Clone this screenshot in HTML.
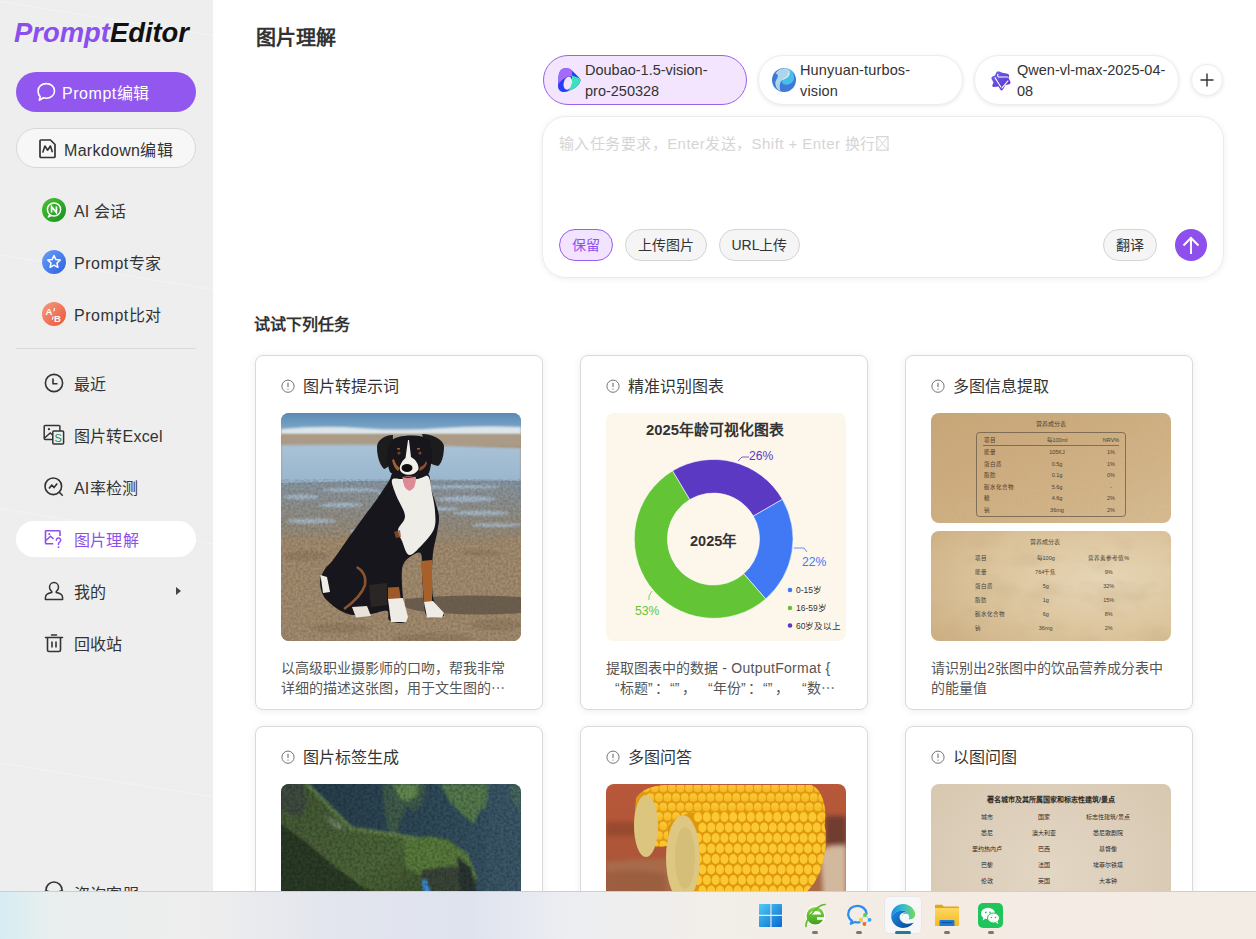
<!DOCTYPE html>
<html lang="zh-CN"><head><meta charset="utf-8">
<style>
*{box-sizing:border-box;margin:0;padding:0}
html,body{width:1256px;height:939px;overflow:hidden;background:#fff;font-family:"Liberation Sans",sans-serif;color:#333}
.abs{position:absolute}
#side{position:absolute;left:0;top:0;width:213px;height:939px;background:#eeeeee}
.logo{position:absolute;left:14px;top:15px;font-size:27.4px;font-weight:bold;font-style:italic;white-space:nowrap;letter-spacing:0px;line-height:36px}
.btn1{position:absolute;left:16px;top:72px;width:180px;height:40px;border-radius:20px;background:#9257ef;color:#fff;font-size:16px;letter-spacing:0.55px}
.btn2{position:absolute;left:16px;top:128px;width:180px;height:40px;border-radius:20px;background:#f7f7f7;border:1px solid #d8d8d8;color:#333;font-size:16px;letter-spacing:0.3px}
.btn1 span,.btn2 span{position:absolute;top:1.5px;line-height:40px;white-space:nowrap}
.nav{position:absolute;left:16px;width:180px;height:36px;border-radius:18px;font-size:16px;color:#333;letter-spacing:0.2px}
.nav .ic{position:absolute;left:26px;top:6px;width:24px;height:24px}
.nav .tx{position:absolute;left:58px;top:1.5px;line-height:36px;white-space:nowrap}
.nav.act{background:#fff;color:#8f4fee}
.divider{position:absolute;left:16px;top:348px;width:180px;height:1px;background:#d9d9d9}
.chip{position:absolute;top:55px;height:50px;border-radius:25px;border:1px solid #ededed;background:#fff;box-shadow:0 1px 4px rgba(0,0,0,.09)}
.chip.sel{background:#f2e5fd;border-color:#9b62ea;box-shadow:none}
.chip .ct{position:absolute;top:4px;font-size:14.5px;line-height:21px;color:#333;white-space:nowrap}
.pbtn{position:absolute;top:112px;height:32px;border-radius:16px;border:1px solid #d4d4d4;background:#f5f5f5;font-size:14px;line-height:30px;text-align:center;color:#333;white-space:nowrap}
.card{position:absolute;width:288px;border-radius:8px;border:1px solid #dadada;background:#fff;box-shadow:0 1px 8px rgba(0,0,0,.07)}
.card .ttl{position:absolute;left:47px;top:14.5px;font-size:16px;line-height:32px;color:#333;white-space:nowrap}
.card .inf{position:absolute;left:25px;top:23.3px}
.card .img{position:absolute;left:25px;top:57px;width:240px;border-radius:8px;overflow:hidden}
.card .desc{position:absolute;left:25px;top:302px;font-size:14px;line-height:20px;color:#555;white-space:nowrap}
</style></head><body>
<div id="side">
  <svg class="abs" style="left:0;top:0" width="213" height="939"><g stroke="#fafafa" stroke-width="1" opacity=".45"><path d="M0 1.5L213 35.5"/><path d="M0 255L213 289.5"/><path d="M0 508.5L213 544"/><path d="M0 763L213 797"/></g></svg>
  <div class="logo"><span style="color:#8b4ff0">Prompt</span><span style="color:#111">Editor</span></div>
  <div class="btn1">
    <svg class="abs" style="left:20px;top:10px" width="20" height="20" viewBox="0 0 20 20"><path d="M10.3 1.6c4.6 0 8.2 3.2 8.2 7.3s-3.6 7.3-8.2 7.3c-1 0-2-.15-2.9-.45L3.3 18.2l.9-3.6C2.8 13.3 2.1 11.2 2.1 8.9c0-4.1 3.6-7.3 8.2-7.3z" fill="none" stroke="#fff" stroke-width="1.6" stroke-linejoin="round"/></svg>
    <span style="left:46px">Prompt编辑</span>
  </div>
  <div class="btn2">
    <svg class="abs" style="left:21px;top:9px" width="20" height="21" viewBox="0 0 20 21"><path d="M3 2h9.5L17 6.5V18.5a1 1 0 0 1-1 1H3a1 1 0 0 1-1-1V3a1 1 0 0 1 1-1z" fill="none" stroke="#333" stroke-width="1.7" stroke-linejoin="round"/><path d="M4.9 14L6.9 8 9.6 12.2 12.4 8 14.2 13.6" fill="none" stroke="#333" stroke-width="1.6" stroke-linejoin="round" stroke-linecap="round"/></svg>
    <span style="left:47px">Markdown编辑</span>
  </div>

  <div class="nav" style="top:192px">
    <svg class="ic" viewBox="0 0 24 24"><defs><linearGradient id="gg" x1="0" y1="0" x2="1" y2="1"><stop offset="0" stop-color="#4cc232"/><stop offset="1" stop-color="#17901f"/></linearGradient></defs><circle cx="12" cy="12" r="12" fill="url(#gg)"/><circle cx="12" cy="11.5" r="6.6" fill="none" stroke="#fff" stroke-width="1.5"/><path d="M7.5 16.5l-1.6 2.8 3.3-1.4" fill="#fff" stroke="#fff" stroke-width="1"/><path d="M9.6 14.5V8.6l4.8 5.9V8.6" fill="none" stroke="#fff" stroke-width="1.7"/></svg>
    <span class="tx">AI 会话</span>
  </div>
  <div class="nav" style="top:244px">
    <svg class="ic" viewBox="0 0 24 24"><defs><linearGradient id="gb" x1="0" y1="0" x2="1" y2="1"><stop offset="0" stop-color="#6aa0f8"/><stop offset="1" stop-color="#2f5fe0"/></linearGradient></defs><circle cx="12" cy="12" r="12" fill="url(#gb)"/><path d="M12 5.6l1.9 4 4.3.5-3.2 2.9.9 4.3L12 15.2l-3.9 2.1.9-4.3-3.2-2.9 4.3-.5z" fill="none" stroke="#fff" stroke-width="1.5" stroke-linejoin="round"/></svg>
    <span class="tx" style="letter-spacing:.55px">Prompt专家</span>
  </div>
  <div class="nav" style="top:296px">
    <svg class="ic" viewBox="0 0 24 24"><defs><linearGradient id="gr" x1="0" y1="0" x2="1" y2="1"><stop offset="0" stop-color="#f79a7a"/><stop offset="1" stop-color="#e8563e"/></linearGradient></defs><circle cx="12" cy="12" r="12" fill="url(#gr)"/><text x="3.6" y="12.6" font-size="9.5" font-weight="bold" fill="#fff" font-family="Liberation Sans">A</text><path d="M12.6 6.2l-.8 3.2M11.2 14.5l-.9 3.2" stroke="#fff" stroke-width="1.1"/><text x="12" y="19.5" font-size="9.5" font-weight="bold" fill="#fff" font-family="Liberation Sans">B</text></svg>
    <span class="tx" style="letter-spacing:.55px">Prompt比对</span>
  </div>
  <div class="divider"></div>
  <div class="nav" style="top:365px">
    <svg class="ic" viewBox="0 0 24 24"><circle cx="12" cy="12" r="8.6" fill="none" stroke="#333" stroke-width="1.6"/><path d="M11 7.5v5.3h4.5" fill="none" stroke="#333" stroke-width="1.6"/></svg>
    <span class="tx">最近</span>
  </div>
  <div class="nav" style="top:417px">
    <svg class="ic" viewBox="0 0 24 24"><path d="M10.5 16.6H3.2a1 1 0 0 1-1-1V3.4a1 1 0 0 1 1-1H16.9a1 1 0 0 1 1 1V7.8" fill="none" stroke="#333" stroke-width="1.5"/><path d="M2.6 15L8.2 9.9 10.8 12.2" fill="none" stroke="#333" stroke-width="1.5"/><circle cx="7" cy="6.2" r="1.1" fill="#333"/><rect x="10.8" y="8" width="10.8" height="13" rx="1" fill="#eeeeee" stroke="#333" stroke-width="1.5"/><text x="12.4" y="19.2" font-size="11" fill="#1b8c5c" font-family="Liberation Sans">S</text></svg>
    <span class="tx">图片转Excel</span>
  </div>
  <div class="nav" style="top:469px">
    <svg class="ic" viewBox="0 0 24 24"><circle cx="11.3" cy="11.3" r="8.3" fill="none" stroke="#333" stroke-width="1.6"/><path d="M7 13.5l2.8-3.5 2.2 2.6 3.2-4" fill="none" stroke="#333" stroke-width="1.6" stroke-linejoin="round"/><path d="M17.3 17.3l3 3" stroke="#333" stroke-width="1.6" stroke-linecap="round"/></svg>
    <span class="tx">AI率检测</span>
  </div>
  <div class="nav act" style="top:521px">
    <svg class="ic" viewBox="0 0 24 24"><path d="M18 9V4.5a.8.8 0 0 0-.8-.8H4.3a.8.8 0 0 0-.8.8V16a.8.8 0 0 0 .8.8h7" fill="none" stroke="#8f4fee" stroke-width="1.6"/><path d="M4 13.5l4.5-4.2 3 2.6" fill="none" stroke="#8f4fee" stroke-width="1.5"/><circle cx="7.3" cy="7" r="1.1" fill="#8f4fee"/><path d="M14.3 13.2a2.2 2.2 0 1 1 3.3 1.9c-.8.5-1.1.9-1.1 1.8v.6" fill="none" stroke="#8f4fee" stroke-width="1.5" stroke-linecap="round"/><circle cx="16.5" cy="20.2" r=".9" fill="#8f4fee"/></svg>
    <span class="tx">图片理解</span>
  </div>
  <div class="nav" style="top:573px">
    <svg class="ic" viewBox="0 0 24 24"><path d="M12 3.5c2.6 0 4.5 2.1 4.5 4.8 0 2-1 3.5-2.3 4.3v.9c3.6.6 6.4 2.6 6.4 5.2v1.8H3.4v-1.8c0-2.6 2.8-4.6 6.4-5.2v-.9C8.5 11.8 7.5 10.3 7.5 8.3 7.5 5.6 9.4 3.5 12 3.5z" fill="none" stroke="#333" stroke-width="1.5" stroke-linejoin="round"/></svg>
    <span class="tx">我的</span>
    <svg class="abs" style="left:160px;top:14px" width="5" height="8" viewBox="0 0 5 8"><path d="M0 0l5 4-5 4z" fill="#444"/></svg>
  </div>
  <div class="nav" style="top:625px">
    <svg class="ic" viewBox="0 0 24 24"><path d="M3.5 6.5h17M9.5 4h5" stroke="#333" stroke-width="1.6" stroke-linecap="round"/><path d="M5.5 6.5v12.5a1.5 1.5 0 0 0 1.5 1.5h10a1.5 1.5 0 0 0 1.5-1.5V6.5" fill="none" stroke="#333" stroke-width="1.6"/><path d="M10 10.5v6M14 10.5v6" stroke="#333" stroke-width="1.6"/></svg>
    <span class="tx">回收站</span>
  </div>
  <div class="nav" style="top:875px">
    <svg class="ic" style="top:4px" viewBox="0 0 24 24"><path d="M4 13v-2a8 8 0 0 1 16 0v2" fill="none" stroke="#333" stroke-width="1.6"/><rect x="3" y="12" width="3.5" height="6" rx="1" fill="none" stroke="#333" stroke-width="1.5"/><rect x="17.5" y="12" width="3.5" height="6" rx="1" fill="none" stroke="#333" stroke-width="1.5"/></svg>
    <span class="tx">咨询客服</span>
  </div>
</div>

<div id="main">
  <div class="abs" style="left:256px;top:23.5px;font-size:20px;font-weight:bold;line-height:28px;color:#333;white-space:nowrap">图片理解</div>

  <div class="chip sel" style="left:543px;width:204px">
    <svg class="abs" style="left:13px;top:10px" width="24" height="27" viewBox="556 66 24 27"><defs><clipPath id="dbc"><path d="M565 68C560 68 557.5 72 557.5 78L557 86C557 90 560 92 563 92C566 92 569 90.5 572 89C576 87 579.5 83 579.5 80C579.5 79 578.5 78 577 76.5L571 70.5C569.5 69 567.5 68 565 68Z"/></clipPath></defs><g clip-path="url(#dbc)"><rect x="556" y="66" width="24" height="27" fill="#2a3cf4"/><path d="M556 66H571V76.5L566.5 76.5 561 80 556 85Z" fill="#a46afb"/><path d="M571 75.5L581 79V93H566.5L568.5 88.5 571 84Z" fill="#3ce0bb"/></g><ellipse cx="566.8" cy="83.2" rx="4.1" ry="6.6" transform="rotate(14 566.8 83.2)" fill="#f2e5fd"/></svg>
    <div class="ct" style="left:41px">Doubao-1.5-vision-<br>pro-250328</div>
  </div>
  <div class="chip" style="left:758px;width:205px">
    <svg class="abs" style="left:12px;top:11px" width="26" height="26" viewBox="771 67 26 26"><circle cx="784" cy="80" r="12" fill="#3d79d5"/><path d="M775.5 73.5C778 69 784 67.5 788.5 68.8C790.5 72 789 76.5 784.5 78.8C780.5 80.5 778.5 84.5 780.5 91.2C777.5 90 775.5 87 775.3 83.5C775.2 80 778.5 77.5 777.8 75.2C777.4 74 776 73.8 775.5 73.5Z" fill="#acd6ec"/><path d="M788.5 68.8C792.5 70.5 794.5 74.5 794 78.5C793.5 82.5 789.5 85 785.5 84.8C782.5 84.5 781.5 82.5 782 80.2C786.5 79.5 790.5 76 788.5 68.8Z" fill="#46bee9"/><path d="M789 70.5C789.8 74.5 787.5 77.8 782.8 79.5" fill="none" stroke="#e8f0f2" stroke-width="1.1"/></svg>
    <div class="ct" style="left:41px;letter-spacing:.15px">Hunyuan-turbos-<br>vision</div>
  </div>
  <div class="chip" style="left:974px;width:205px">
    <svg class="abs" style="left:15px;top:14px" width="21" height="21" viewBox="989 69 21 21"><defs><linearGradient id="qg" x1="0" y1="0" x2="1" y2="1"><stop offset="0" stop-color="#6b66e6"/><stop offset="1" stop-color="#5a2cd0"/></linearGradient></defs><path d="M996.2 70.6C997.5 70.2 999.5 70.6 1000.4 71.5L1006.5 72.8C1008 73.3 1008.5 74.5 1008 75.5L1007.5 77 1009.3 80.5C1009.8 81.8 1009.3 82.8 1008.3 83.3L1004.5 84 1001.8 88.8C1001 89.6 1000 89.6 999.3 88.5L997.5 85.5 992.8 86C991.8 86 991 85.2 991.3 84.2L992.5 81.5 990.7 78.2C990.2 77.2 990.5 76 991.5 75.5L994 74.5 995 72z" fill="url(#qg)"/><path d="M997 72.8L996.6 74.6 997.2 75.9H1007.3M993.8 76.4L1000 86.2M1007.2 79.6L1000.6 87.3" fill="none" stroke="#fff" stroke-width="1.05" stroke-linejoin="round"/></svg>
    <div class="ct" style="left:42px">Qwen-vl-max-2025-04-<br>08</div>
  </div>
  <div class="abs" style="left:1191px;top:64px;width:32px;height:32px;border-radius:16px;border:1px solid #ededed;background:#fff;box-shadow:0 1px 4px rgba(0,0,0,.09)">
    <svg class="abs" style="left:8px;top:8px" width="14" height="14" viewBox="0 0 14 14"><path d="M7 .5v13M.5 7h13" stroke="#333" stroke-width="1.4"/></svg>
  </div>

  <div class="abs" style="left:542px;top:116px;width:682px;height:162px;border-radius:24px;border:1px solid #ebebeb;box-shadow:0 1px 6px rgba(0,0,0,.07)">
    <div class="abs" style="left:16px;top:17px;font-size:15px;letter-spacing:0.45px;color:#d5d5d5;white-space:nowrap;line-height:20px">输入任务要求，Enter发送，Shift + Enter 换行<svg style="display:inline-block;vertical-align:-2px;margin-left:.5px" width="13" height="16" viewBox="0 0 13 16"><rect x=".8" y="1.6" width="11.2" height="13.6" fill="none" stroke="#d6d6d6" stroke-width="1.2"/><path d="M1 1.8L12 15M12 1.8L1 15" stroke="#d6d6d6" stroke-width="1"/></svg></div>
    <div class="pbtn" style="left:16px;width:54px;background:#f2e4fe;border-color:#9a5df0;color:#8f4fee">保留</div>
    <div class="pbtn" style="left:82px;width:82px">上传图片</div>
    <div class="pbtn" style="left:176px;width:81px">URL上传</div>
    <div class="pbtn" style="left:560px;width:54px">翻译</div>
    <div class="abs" style="left:632px;top:112px;width:32px;height:32px;border-radius:16px;background:#8d50ec">
      <svg class="abs" style="left:6px;top:5px" width="20" height="22" viewBox="0 0 20 22"><path d="M10 19V4M3.2 10.8L10 4l6.8 6.8" fill="none" stroke="#fff" stroke-width="2" stroke-linecap="square" stroke-linejoin="miter"/></svg>
    </div>
  </div>

  <div class="abs" style="left:254px;top:314px;font-size:16px;font-weight:bold;line-height:22px;color:#333;white-space:nowrap">试试下列任务</div>
  
  <div class="card" style="left:255px;top:355px;height:355px"><svg class="inf" width="14" height="14" viewBox="0 0 14 14"><circle cx="7" cy="7.2" r="6.1" fill="none" stroke="#737373" stroke-width="1"/><path d="M7 3.8v4.3" stroke="#737373" stroke-width="1.15"/><circle cx="7" cy="10.1" r=".7" fill="#737373"/></svg><div class="ttl">图片转提示词</div>
    <div class="img" style="height:228px"><svg width="240" height="228" viewBox="0 0 240 228" style="display:block">
<defs>
<linearGradient id="sea" x1="0" y1="0" x2="0" y2="1"><stop offset="0" stop-color="#5a8bb6"/><stop offset="1" stop-color="#80a7c8"/></linearGradient>
<linearGradient id="wet" x1="0" y1="0" x2="0" y2="1"><stop offset="0" stop-color="#a9c2d6"/><stop offset="1" stop-color="#98b5cd"/></linearGradient>
<linearGradient id="mud" x1="0" y1="0" x2="0" y2="1"><stop offset="0" stop-color="#8795a1"/><stop offset=".6" stop-color="#918d84"/><stop offset="1" stop-color="#9c8a70"/></linearGradient>
<linearGradient id="sand" x1="0" y1="0" x2="0" y2="1"><stop offset="0" stop-color="#a38b6d"/><stop offset="1" stop-color="#9b8468"/></linearGradient>
<filter id="bl"><feGaussianBlur stdDeviation="1.2"/></filter>
<filter id="bl2"><feGaussianBlur stdDeviation=".5"/></filter>
<filter id="dnoise" x="0" y="0" width="100%" height="100%"><feTurbulence type="fractalNoise" baseFrequency=".4" numOctaves="2" seed="7"/><feColorMatrix values="0 0 0 0 0  0 0 0 0 0  0 0 0 0 0  0 0 0 1.5 -.5"/></filter>
</defs>
<rect width="240" height="228" fill="url(#sand)"/>
<rect width="240" height="18" fill="url(#sea)"/>
<path d="M0 16Q40 12 80 15T160 15T240 14V22H0z" fill="#dce5ea" filter="url(#bl)"/>
<rect y="21" width="240" height="12" fill="#ab9b86" filter="url(#bl)"/>
<path d="M0 32Q120 30 240 35V72H0z" fill="url(#wet)" filter="url(#bl)"/>
<path d="M0 70Q120 66 240 68V128Q120 132 0 128z" fill="url(#mud)"/>
<g fill="#aac0d3" opacity=".8" filter="url(#bl)"><ellipse cx="120" cy="80" rx="25" ry="2"/><ellipse cx="110" cy="104" rx="20" ry="2"/><ellipse cx="160" cy="96" rx="18" ry="2"/><ellipse cx="90" cy="118" rx="22" ry="1.8"/><ellipse cx="20" cy="84" rx="18" ry="2.5"/><ellipse cx="60" cy="92" rx="22" ry="2.5"/><ellipse cx="185" cy="86" rx="30" ry="3"/><ellipse cx="200" cy="100" rx="28" ry="2.5"/><ellipse cx="30" cy="108" rx="25" ry="2.5"/><ellipse cx="215" cy="112" rx="25" ry="2"/><ellipse cx="70" cy="77" rx="30" ry="2"/><ellipse cx="180" cy="74" rx="40" ry="2"/></g>
<path d="M0 126Q60 122 120 128T240 124V228H0z" fill="#a28b6e" filter="url(#bl2)"/>
<g fill="#857159" opacity=".45" filter="url(#bl)"><ellipse cx="25" cy="143" rx="22" ry="5"/><ellipse cx="200" cy="140" rx="20" ry="3"/><ellipse cx="215" cy="212" rx="25" ry="6"/><ellipse cx="60" cy="215" rx="30" ry="5"/><ellipse cx="150" cy="225" rx="40" ry="5"/></g><rect y="66" width="240" height="162" filter="url(#dnoise)" opacity=".22"/>
<path d="M124 186Q180 180 240 184V200Q200 203 160 200Q135 199 124 194z" fill="#5e5245" opacity=".8" filter="url(#bl2)"/>
<g filter="url(#bl2)">
<path d="M108.0 68.0C105.3 72.3 100.3 79.8 96.0 86.0C91.7 92.2 87.0 98.2 82.0 105.0C77.0 111.8 71.0 120.0 66.0 127.0C61.0 134.0 55.7 142.2 52.0 147.0C48.3 151.8 46.2 152.5 44.0 156.0C41.8 159.5 39.3 163.7 39.0 168.0C38.7 172.3 40.2 178.2 42.0 182.0C43.8 185.8 47.0 188.3 50.0 191.0C53.0 193.7 56.3 196.2 60.0 198.0C63.7 199.8 67.0 201.5 72.0 202.0C77.0 202.5 84.3 201.7 90.0 201.0C95.7 200.3 103.0 197.0 106.0 198.0C109.0 199.0 106.0 205.0 108.0 207.0C110.0 209.0 115.2 210.0 118.0 210.0C120.8 210.0 124.2 210.0 125.0 207.0C125.8 204.0 123.7 197.8 123.0 192.0C122.3 186.2 121.2 178.7 121.0 172.0C120.8 165.3 120.2 157.0 122.0 152.0C123.8 147.0 129.0 143.8 132.0 142.0C135.0 140.2 138.5 138.0 140.0 141.0C141.5 144.0 140.5 151.8 141.0 160.0C141.5 168.2 142.2 182.8 143.0 190.0C143.8 197.2 143.5 200.7 146.0 203.0C148.5 205.3 155.2 204.3 158.0 204.0C160.8 203.7 163.8 203.7 163.0 201.0C162.2 198.3 155.0 194.0 153.0 188.0C151.0 182.0 151.2 173.0 151.0 165.0C150.8 157.0 151.2 147.5 152.0 140.0C152.8 132.5 155.0 126.0 156.0 120.0C157.0 114.0 158.3 109.3 158.0 104.0C157.7 98.7 155.3 92.7 154.0 88.0C152.7 83.3 151.0 80.3 150.0 76.0C149.0 71.7 149.7 64.5 148.0 62.0C146.3 59.5 144.3 61.0 140.0 61.0C135.7 61.0 126.7 62.2 122.0 62.0C117.3 61.8 114.3 59.0 112.0 60.0C109.7 61.0 110.7 63.7 108.0 68.0Z" fill="#17171b"/>
<path d="M111.0 67.0C110.0 69.7 112.8 76.0 115.0 82.0C117.2 88.0 123.7 97.2 124.0 103.0C124.3 108.8 117.5 112.8 117.0 117.0C116.5 121.2 119.2 123.8 121.0 128.0C122.8 132.2 124.8 141.2 128.0 142.0C131.2 142.8 135.8 137.3 140.0 133.0C144.2 128.7 150.7 121.8 153.0 116.0C155.3 110.2 154.3 104.0 154.0 98.0C153.7 92.0 152.2 85.8 151.0 80.0C149.8 74.2 149.5 65.3 147.0 63.0C144.5 60.7 140.3 65.5 136.0 66.0C131.7 66.5 125.2 65.8 121.0 66.0C116.8 66.2 112.0 64.3 111.0 67.0Z" fill="#efede8"/>
<path d="M113 119L119 117 120 124 115 125z" fill="#8a5430" opacity=".8"/>
<path d="M140 148L151 147 151 189 143 189z" fill="#a8612c"/>
<path d="M107 174.5L118 174 120 187 107 187z" fill="#9c5a2c"/>
<path d="M88 172L106 170 106 192 90 194z" fill="#3a332e" opacity=".6"/>
<path d="M75.7 154Q86 160 84 172Q80 184 63 196" fill="none" stroke="#8a5230" stroke-width="2.5"/>
<path d="M39.5 162L46 164 49 179 42 180z" fill="#efece6"/>
<path d="M107 186L122 185 127 204 125 209 110 209z" fill="#efece6"/>
<path d="M143 189L152 188 163 200 161 204.5 146 204.5z" fill="#efece6"/>
<path d="M71 194L86 193 90 203 75 204.5z" fill="#e8e2d8"/>
<path d="M112 22C103 22 96 28 96 34C96 44 99 52 103 56C107 55 111 50 111 46z" fill="#1c1b1f"/>
<path d="M141 21C152 21 162 27 163 33C163 42 161 50 157 53C152 52 148 50 148 48z" fill="#1c1b1f"/>
<path d="M110 28C114 22 140 20 148 27C152 35 151 52 148 60C143 68 117 68 109 59C105 50 106 36 110 28z" fill="#17161a"/>
<path d="M127 27L124.5 45C121 48 118 53 119 57C121 63 134 64 137.5 56C138 51 134 46 130 44L128 27z" fill="#f1efea"/>
<path d="M111 47C112 52 114 56 117 58L119 55C116 53 114 50 113 46z" fill="#a0602c"/>
<path d="M146 50C145 54 142 57 138 58L139 54C142 53 144 51 145 48z" fill="#8a5030"/>
<circle cx="118" cy="40" r="1.6" fill="#7a4020"/><circle cx="139" cy="40" r="1.6" fill="#7a4020"/>
<path d="M116 35.5l3 .5M136 36l3 -.5" stroke="#a06030" stroke-width="1.5"/>
<ellipse cx="126" cy="55" rx="5.5" ry="4" fill="#111"/>
<path d="M121.5 64Q128 62 135 64Q135 76 128.5 78Q122 76 121.5 64z" fill="#dc8a96"/>
<path d="M120 63Q128 66 137 62" fill="none" stroke="#222" stroke-width="1.2"/>
</g>
</svg></div>
    <div class="desc">以高级职业摄影师的口吻，帮我非常<br>详细的描述这张图，用于文生图的⋯</div>
  </div>
  <div class="card" style="left:580px;top:355px;height:355px"><svg class="inf" width="14" height="14" viewBox="0 0 14 14"><circle cx="7" cy="7.2" r="6.1" fill="none" stroke="#737373" stroke-width="1"/><path d="M7 3.8v4.3" stroke="#737373" stroke-width="1.15"/><circle cx="7" cy="10.1" r=".7" fill="#737373"/></svg><div class="ttl">精准识别图表</div>
    <div class="img" style="height:228px"><svg width="240" height="228" viewBox="0 0 240 228" style="display:block" font-family="Liberation Sans">
<rect width="240" height="228" fill="#fdf6eb"/>
<text x="40" y="22" font-size="14.8" font-weight="bold" fill="#333">2025年龄可视化图表</text>
<g transform="translate(107.5 126)">
<path d="M68.9 -39.8A79.5 79.5 0 0 1 52.2 60L30.2 34.7A46 46 0 0 0 39.8 -23z" fill="#4179f5" stroke="#fff" stroke-width=".6"/>
<path d="M52.2 60A79.5 79.5 0 1 1 -40.9 -68.2L-23.7 -39.4A46 46 0 1 0 30.2 34.7z" fill="#63c535" stroke="#fff" stroke-width=".6"/>
<path d="M-40.9 -68.2A79.5 79.5 0 0 1 68.9 -39.8L39.8 -23A46 46 0 0 0 -23.7 -39.4z" fill="#5b39c3" stroke="#fff" stroke-width=".6"/>
</g>
<text x="84" y="133" font-size="14.5" font-weight="bold" fill="#333">2025年</text>
<path d="M132 48l4-4h7" fill="none" stroke="#5b39c3" stroke-width=".8"/>
<text x="143" y="47" font-size="12.2" fill="#5b39c3">26%</text>
<path d="M188 135h10l3 4" fill="none" stroke="#4179f5" stroke-width=".8"/>
<text x="196" y="153" font-size="12.2" fill="#4179f5">22%</text>
<path d="M46 178l-3 5v4" fill="none" stroke="#63c535" stroke-width=".8"/>
<text x="29" y="202" font-size="12.2" fill="#63c535">53%</text>
<circle cx="184" cy="177" r="2.3" fill="#4179f5"/><text x="190" y="180" font-size="8.5" fill="#333">0-15岁</text>
<circle cx="184" cy="195" r="2.3" fill="#63c535"/><text x="190" y="198" font-size="8.5" fill="#333">16-59岁</text>
<circle cx="184" cy="212.5" r="2.3" fill="#5b39c3"/><text x="190" y="215.5" font-size="8.5" fill="#333">60岁及以上</text>
</svg></div>
    <div class="desc" style="width:240px;height:40px">提取图表中的数据<span style="letter-spacing:.3px"> - OutputFormat {</span><span class="abs" style="left:9px;top:20px">“</span><span class="abs" style="left:14px;top:20px">标题</span><span class="abs" style="left:42px;top:20px">”</span><span class="abs" style="left:49px;top:20px">：</span><span class="abs" style="left:64px;top:20px">“”</span><span class="abs" style="left:76px;top:20px">，</span><span class="abs" style="left:102px;top:20px">“</span><span class="abs" style="left:107px;top:20px">年份</span><span class="abs" style="left:135px;top:20px">”</span><span class="abs" style="left:142px;top:20px">：</span><span class="abs" style="left:157px;top:20px">“”</span><span class="abs" style="left:169px;top:20px">，</span><span class="abs" style="left:196px;top:20px">“</span><span class="abs" style="left:201px;top:20px">数</span><span class="abs" style="left:215px;top:20px">⋯</span></div>
  </div>
  <div class="card" style="left:905px;top:355px;height:355px"><svg class="inf" width="14" height="14" viewBox="0 0 14 14"><circle cx="7" cy="7.2" r="6.1" fill="none" stroke="#737373" stroke-width="1"/><path d="M7 3.8v4.3" stroke="#737373" stroke-width="1.15"/><circle cx="7" cy="10.1" r=".7" fill="#737373"/></svg><div class="ttl">多图信息提取</div>
    <div class="img" style="height:110px"><svg width="240" height="110" viewBox="0 0 240 110" style="display:block" font-family="Liberation Sans"><defs><linearGradient id="kr" x1="0" y1="0" x2="1" y2="1"><stop offset="0" stop-color="#c7a677"/><stop offset=".6" stop-color="#d0b185"/><stop offset="1" stop-color="#d6bb91"/></linearGradient></defs><filter id="kraft" x="0" y="0" width="100%" height="100%"><feTurbulence type="fractalNoise" baseFrequency=".6" numOctaves="2" seed="2"/><feColorMatrix values="0 0 0 0 .45  0 0 0 0 .33  0 0 0 0 .18  0 0 0 1.2 -.5"/></filter><rect width="240" height="110" fill="url(#kr)"/><rect width="240" height="110" filter="url(#kraft)" opacity=".25"/><text x="120" y="13" font-size="6" fill="#4a3f33" text-anchor="middle">营养成分表</text><rect x="45.5" y="19.5" width="149" height="84" rx="3" fill="none" stroke="#5e5244" stroke-width=".7"/><path d="M52 32.5h136" stroke="#5e5244" stroke-width=".7"/><text x="52.5" y="29" font-size="5.5" fill="#4a3f33">项目</text><text x="126" y="29" font-size="5.5" fill="#4a3f33" text-anchor="middle">每100ml</text><text x="180" y="29" font-size="5.5" fill="#4a3f33" text-anchor="middle">NRV%</text><text x="52.5" y="41" font-size="5.5" fill="#4a3f33">能量</text><text x="126" y="41" font-size="5.5" fill="#4a3f33" text-anchor="middle">105KJ</text><text x="180" y="41" font-size="5.5" fill="#4a3f33" text-anchor="middle">1%</text><text x="52.5" y="52.5" font-size="5.5" fill="#4a3f33">蛋白质</text><text x="126" y="52.5" font-size="5.5" fill="#4a3f33" text-anchor="middle">0.5g</text><text x="180" y="52.5" font-size="5.5" fill="#4a3f33" text-anchor="middle">1%</text><text x="52.5" y="64" font-size="5.5" fill="#4a3f33">脂肪</text><text x="126" y="64" font-size="5.5" fill="#4a3f33" text-anchor="middle">0.1g</text><text x="180" y="64" font-size="5.5" fill="#4a3f33" text-anchor="middle">0%</text><text x="52.5" y="75.5" font-size="5.5" fill="#4a3f33">碳水化合物</text><text x="126" y="75.5" font-size="5.5" fill="#4a3f33" text-anchor="middle">5.6g</text><text x="180" y="75.5" font-size="5.5" fill="#4a3f33" text-anchor="middle">-</text><text x="52.5" y="87" font-size="5.5" fill="#4a3f33">糖</text><text x="126" y="87" font-size="5.5" fill="#4a3f33" text-anchor="middle">4.6g</text><text x="180" y="87" font-size="5.5" fill="#4a3f33" text-anchor="middle">2%</text><text x="52.5" y="98.5" font-size="5.5" fill="#4a3f33">钠</text><text x="126" y="98.5" font-size="5.5" fill="#4a3f33" text-anchor="middle">36mg</text><text x="180" y="98.5" font-size="5.5" fill="#4a3f33" text-anchor="middle">2%</text></svg></div>
    <div class="img" style="top:175px;height:110px"><svg width="240" height="110" viewBox="0 0 240 110" style="display:block" font-family="Liberation Sans"><defs><radialGradient id="pp" cx=".72" cy=".45" r=".9"><stop offset="0" stop-color="#e6d5b6"/><stop offset=".55" stop-color="#dbc49c"/><stop offset="1" stop-color="#cdae82"/></radialGradient></defs><filter id="blot" x="0" y="0" width="100%" height="100%"><feTurbulence type="fractalNoise" baseFrequency=".025 .04" numOctaves="3" seed="11"/><feColorMatrix values="0 0 0 0 .55  0 0 0 0 .4  0 0 0 0 .22  0 0 0 2.2 -1.05"/></filter><rect width="240" height="110" fill="url(#pp)"/><rect width="240" height="110" filter="url(#blot)" opacity=".35"/><text x="114" y="13" font-size="6" fill="#4a3f33" text-anchor="middle">营养成分表</text><text x="43.6" y="28.5" font-size="5.5" fill="#4a3f33">项目</text><text x="114.7" y="28.5" font-size="5.5" fill="#4a3f33" text-anchor="middle">每100g</text><text x="177.7" y="28.5" font-size="5.5" fill="#4a3f33" text-anchor="middle">营养素参考值%</text><text x="43.6" y="42.5" font-size="5.5" fill="#4a3f33">能量</text><text x="114.7" y="42.5" font-size="5.5" fill="#4a3f33" text-anchor="middle">764千焦</text><text x="177.7" y="42.5" font-size="5.5" fill="#4a3f33" text-anchor="middle">9%</text><text x="43.6" y="57" font-size="5.5" fill="#4a3f33">蛋白质</text><text x="114.7" y="57" font-size="5.5" fill="#4a3f33" text-anchor="middle">5g</text><text x="177.7" y="57" font-size="5.5" fill="#4a3f33" text-anchor="middle">32%</text><text x="43.6" y="70.5" font-size="5.5" fill="#4a3f33">脂肪</text><text x="114.7" y="70.5" font-size="5.5" fill="#4a3f33" text-anchor="middle">1g</text><text x="177.7" y="70.5" font-size="5.5" fill="#4a3f33" text-anchor="middle">15%</text><text x="43.6" y="85" font-size="5.5" fill="#4a3f33">碳水化合物</text><text x="114.7" y="85" font-size="5.5" fill="#4a3f33" text-anchor="middle">6g</text><text x="177.7" y="85" font-size="5.5" fill="#4a3f33" text-anchor="middle">8%</text><text x="43.6" y="99" font-size="5.5" fill="#4a3f33">钠</text><text x="114.7" y="99" font-size="5.5" fill="#4a3f33" text-anchor="middle">36mg</text><text x="177.7" y="99" font-size="5.5" fill="#4a3f33" text-anchor="middle">2%</text></svg></div>
    <div class="desc">请识别出2张图中的饮品营养成分表中<br>的能量值</div>
  </div>
  <div class="card" style="left:255px;top:726px;height:300px"><svg class="inf" width="14" height="14" viewBox="0 0 14 14"><circle cx="7" cy="7.2" r="6.1" fill="none" stroke="#737373" stroke-width="1"/><path d="M7 3.8v4.3" stroke="#737373" stroke-width="1.15"/><circle cx="7" cy="10.1" r=".7" fill="#737373"/></svg><div class="ttl">图片标签生成</div>
    <div class="img" style="height:228px"><svg width="240" height="228" viewBox="0 0 240 228" style="display:block">
<defs><linearGradient id="cl" x1="0" y1="0" x2="1" y2="0"><stop offset="0" stop-color="#263b48"/><stop offset=".6" stop-color="#2f4a59"/><stop offset="1" stop-color="#3a5668"/></linearGradient>
<linearGradient id="gs" x1="0" y1="0" x2="1" y2="1"><stop offset="0" stop-color="#415636"/><stop offset=".55" stop-color="#4d6638"/><stop offset="1" stop-color="#30412a"/></linearGradient><filter id="noise" x="0" y="0" width="100%" height="100%"><feTurbulence type="fractalNoise" baseFrequency=".35" numOctaves="2" seed="4"/><feColorMatrix values="0 0 0 0 0  0 0 0 0 0  0 0 0 0 0  0 0 0 1.6 -.55"/></filter>
<filter id="mb"><feGaussianBlur stdDeviation="1.3"/></filter></defs>
<rect width="240" height="228" fill="url(#cl)"/>
<g filter="url(#mb)">
<path d="M101 0h44l-3 18-8 10-8-5-6 12-4 15-6 3-6-20z" fill="#43604a" opacity=".8"/>
<path d="M112 0h26l-2 12-10 6-8-4z" fill="#62884f"/>
<path d="M159 0h50l-3 22-8 6-5 12-10-8-14-14z" fill="#557a4e"/>
<path d="M228 0h12v28l-8-8z" fill="#557a4e" opacity=".8"/>
<path d="M205 0h35v228h-35z" fill="#3d596a" opacity=".5"/>
<path d="M0 0h26l22 22 22 22 40 6 30 5 25 3 20 12 10 25v33H0z" fill="url(#gs)"/>
<path d="M26 0l22 22 22 22 40 6 30 5 25 3 20 12 10 25" fill="none" stroke="#76964f" stroke-width="4" opacity=".6"/>
<path d="M0 40l25 18 28 24 30 22 20 6H0z" fill="#2c3a27"/>
<path d="M0 0h22l4 18-6 15-12-4-8-6z" fill="#3f4b40"/>
<path d="M44 32l14 6 6 8-10-2z" fill="#8d9c8a" opacity=".55"/>
<path d="M122 56l28-4 18 4 17 14 8 18-10 6-28 4-30-14z" fill="#587a3e"/>
<path d="M140 86l32-4 18 8 5 20h-52z" fill="#3a4538"/>
<path d="M176 72l14 12 6 26h-16z" fill="#2c3633"/>
<path d="M141 96l4-1 5 15h-7z" fill="#3b8fd0"/>
</g>
<rect width="240" height="228" filter="url(#noise)" opacity=".35"/>
</svg></div>
  </div>
  <div class="card" style="left:580px;top:726px;height:300px"><svg class="inf" width="14" height="14" viewBox="0 0 14 14"><circle cx="7" cy="7.2" r="6.1" fill="none" stroke="#737373" stroke-width="1"/><path d="M7 3.8v4.3" stroke="#737373" stroke-width="1.15"/><circle cx="7" cy="10.1" r=".7" fill="#737373"/></svg><div class="ttl">多图问答</div>
    <div class="img" style="height:228px"><svg width="240" height="228" viewBox="0 0 240 228" style="display:block">
<defs><linearGradient id="cbg" x1="0" y1="0" x2="0" y2="1"><stop offset="0" stop-color="#b9583a"/><stop offset=".35" stop-color="#ac5538"/><stop offset="1" stop-color="#a35c3c"/></linearGradient>
<linearGradient id="ky" x1="0" y1="0" x2="0" y2="1"><stop offset="0" stop-color="#fcca3a"/><stop offset="1" stop-color="#f7b81c"/></linearGradient>
<clipPath id="cc1"><path d="M30 14Q38 2 60 1H205Q216 5 219 25Q221 45 211 62H60Q33 66 28 40z"/></clipPath>
<clipPath id="cc2"><path d="M62 42Q70 29 95 28H211Q223 40 219 66Q216 96 196 112H95Q70 106 62 72z"/></clipPath>
<filter id="cb"><feGaussianBlur stdDeviation="2"/></filter><filter id="cb2"><feGaussianBlur stdDeviation=".45"/></filter></defs>
<rect width="240" height="228" fill="url(#cbg)"/>
<g filter="url(#cb)"><path d="M0 38h32v14H0z" fill="#7a3a28" opacity=".45"/><path d="M0 78Q60 70 120 80T240 62V228H0z" fill="#a86b4a"/><path d="M0 88Q30 84 60 90V228H0z" fill="#8e5238" opacity=".5"/><path d="M214 66Q240 56 240 62V228H196Q226 150 214 66z" fill="#d9c7ad" opacity=".85"/><path d="M220 32h20v30h-20z" fill="#3a2a25" opacity=".55"/></g>
<g filter="url(#cb2)">
<path d="M30 14Q38 2 60 1H205Q216 5 219 25Q221 45 211 62H60Q33 66 28 40z" fill="#e09a12"/>
<g clip-path="url(#cc1)" fill="url(#ky)"><ellipse cx="40.0" cy="4.0" rx="3.9" ry="4.3"/><ellipse cx="48.6" cy="4.0" rx="3.9" ry="4.3"/><ellipse cx="57.2" cy="4.0" rx="3.9" ry="4.3"/><ellipse cx="65.8" cy="4.0" rx="3.9" ry="4.3"/><ellipse cx="74.4" cy="4.0" rx="3.9" ry="4.3"/><ellipse cx="83.0" cy="4.0" rx="3.9" ry="4.3"/><ellipse cx="91.6" cy="4.0" rx="3.9" ry="4.3"/><ellipse cx="100.2" cy="4.0" rx="3.9" ry="4.3"/><ellipse cx="108.8" cy="4.0" rx="3.9" ry="4.3"/><ellipse cx="117.4" cy="4.0" rx="3.9" ry="4.3"/><ellipse cx="126.0" cy="4.0" rx="3.9" ry="4.3"/><ellipse cx="134.6" cy="4.0" rx="3.9" ry="4.3"/><ellipse cx="143.2" cy="4.0" rx="3.9" ry="4.3"/><ellipse cx="151.8" cy="4.0" rx="3.9" ry="4.3"/><ellipse cx="160.4" cy="4.0" rx="3.9" ry="4.3"/><ellipse cx="169.0" cy="4.0" rx="3.9" ry="4.3"/><ellipse cx="177.6" cy="4.0" rx="3.9" ry="4.3"/><ellipse cx="186.2" cy="4.0" rx="3.9" ry="4.3"/><ellipse cx="194.8" cy="4.0" rx="3.9" ry="4.3"/><ellipse cx="203.4" cy="4.0" rx="3.9" ry="4.3"/><ellipse cx="212.0" cy="4.0" rx="3.9" ry="4.3"/><ellipse cx="220.6" cy="4.0" rx="3.9" ry="4.3"/><ellipse cx="44.3" cy="13.5" rx="3.9" ry="4.3"/><ellipse cx="52.9" cy="13.5" rx="3.9" ry="4.3"/><ellipse cx="61.5" cy="13.5" rx="3.9" ry="4.3"/><ellipse cx="70.1" cy="13.5" rx="3.9" ry="4.3"/><ellipse cx="78.7" cy="13.5" rx="3.9" ry="4.3"/><ellipse cx="87.3" cy="13.5" rx="3.9" ry="4.3"/><ellipse cx="95.9" cy="13.5" rx="3.9" ry="4.3"/><ellipse cx="104.5" cy="13.5" rx="3.9" ry="4.3"/><ellipse cx="113.1" cy="13.5" rx="3.9" ry="4.3"/><ellipse cx="121.7" cy="13.5" rx="3.9" ry="4.3"/><ellipse cx="130.3" cy="13.5" rx="3.9" ry="4.3"/><ellipse cx="138.9" cy="13.5" rx="3.9" ry="4.3"/><ellipse cx="147.5" cy="13.5" rx="3.9" ry="4.3"/><ellipse cx="156.1" cy="13.5" rx="3.9" ry="4.3"/><ellipse cx="164.7" cy="13.5" rx="3.9" ry="4.3"/><ellipse cx="173.3" cy="13.5" rx="3.9" ry="4.3"/><ellipse cx="181.9" cy="13.5" rx="3.9" ry="4.3"/><ellipse cx="190.5" cy="13.5" rx="3.9" ry="4.3"/><ellipse cx="199.1" cy="13.5" rx="3.9" ry="4.3"/><ellipse cx="207.7" cy="13.5" rx="3.9" ry="4.3"/><ellipse cx="216.3" cy="13.5" rx="3.9" ry="4.3"/><ellipse cx="40.0" cy="23.0" rx="3.9" ry="4.3"/><ellipse cx="48.6" cy="23.0" rx="3.9" ry="4.3"/><ellipse cx="57.2" cy="23.0" rx="3.9" ry="4.3"/><ellipse cx="65.8" cy="23.0" rx="3.9" ry="4.3"/><ellipse cx="74.4" cy="23.0" rx="3.9" ry="4.3"/><ellipse cx="83.0" cy="23.0" rx="3.9" ry="4.3"/><ellipse cx="91.6" cy="23.0" rx="3.9" ry="4.3"/><ellipse cx="100.2" cy="23.0" rx="3.9" ry="4.3"/><ellipse cx="108.8" cy="23.0" rx="3.9" ry="4.3"/><ellipse cx="117.4" cy="23.0" rx="3.9" ry="4.3"/><ellipse cx="126.0" cy="23.0" rx="3.9" ry="4.3"/><ellipse cx="134.6" cy="23.0" rx="3.9" ry="4.3"/><ellipse cx="143.2" cy="23.0" rx="3.9" ry="4.3"/><ellipse cx="151.8" cy="23.0" rx="3.9" ry="4.3"/><ellipse cx="160.4" cy="23.0" rx="3.9" ry="4.3"/><ellipse cx="169.0" cy="23.0" rx="3.9" ry="4.3"/><ellipse cx="177.6" cy="23.0" rx="3.9" ry="4.3"/><ellipse cx="186.2" cy="23.0" rx="3.9" ry="4.3"/><ellipse cx="194.8" cy="23.0" rx="3.9" ry="4.3"/><ellipse cx="203.4" cy="23.0" rx="3.9" ry="4.3"/><ellipse cx="212.0" cy="23.0" rx="3.9" ry="4.3"/><ellipse cx="220.6" cy="23.0" rx="3.9" ry="4.3"/><ellipse cx="44.3" cy="32.5" rx="3.9" ry="4.3"/><ellipse cx="52.9" cy="32.5" rx="3.9" ry="4.3"/><ellipse cx="61.5" cy="32.5" rx="3.9" ry="4.3"/><ellipse cx="70.1" cy="32.5" rx="3.9" ry="4.3"/><ellipse cx="78.7" cy="32.5" rx="3.9" ry="4.3"/><ellipse cx="87.3" cy="32.5" rx="3.9" ry="4.3"/><ellipse cx="95.9" cy="32.5" rx="3.9" ry="4.3"/><ellipse cx="104.5" cy="32.5" rx="3.9" ry="4.3"/><ellipse cx="113.1" cy="32.5" rx="3.9" ry="4.3"/><ellipse cx="121.7" cy="32.5" rx="3.9" ry="4.3"/><ellipse cx="130.3" cy="32.5" rx="3.9" ry="4.3"/><ellipse cx="138.9" cy="32.5" rx="3.9" ry="4.3"/><ellipse cx="147.5" cy="32.5" rx="3.9" ry="4.3"/><ellipse cx="156.1" cy="32.5" rx="3.9" ry="4.3"/><ellipse cx="164.7" cy="32.5" rx="3.9" ry="4.3"/><ellipse cx="173.3" cy="32.5" rx="3.9" ry="4.3"/><ellipse cx="181.9" cy="32.5" rx="3.9" ry="4.3"/><ellipse cx="190.5" cy="32.5" rx="3.9" ry="4.3"/><ellipse cx="199.1" cy="32.5" rx="3.9" ry="4.3"/><ellipse cx="207.7" cy="32.5" rx="3.9" ry="4.3"/><ellipse cx="216.3" cy="32.5" rx="3.9" ry="4.3"/><ellipse cx="40.0" cy="42.0" rx="3.9" ry="4.3"/><ellipse cx="48.6" cy="42.0" rx="3.9" ry="4.3"/><ellipse cx="57.2" cy="42.0" rx="3.9" ry="4.3"/><ellipse cx="65.8" cy="42.0" rx="3.9" ry="4.3"/><ellipse cx="74.4" cy="42.0" rx="3.9" ry="4.3"/><ellipse cx="83.0" cy="42.0" rx="3.9" ry="4.3"/><ellipse cx="91.6" cy="42.0" rx="3.9" ry="4.3"/><ellipse cx="100.2" cy="42.0" rx="3.9" ry="4.3"/><ellipse cx="108.8" cy="42.0" rx="3.9" ry="4.3"/><ellipse cx="117.4" cy="42.0" rx="3.9" ry="4.3"/><ellipse cx="126.0" cy="42.0" rx="3.9" ry="4.3"/><ellipse cx="134.6" cy="42.0" rx="3.9" ry="4.3"/><ellipse cx="143.2" cy="42.0" rx="3.9" ry="4.3"/><ellipse cx="151.8" cy="42.0" rx="3.9" ry="4.3"/><ellipse cx="160.4" cy="42.0" rx="3.9" ry="4.3"/><ellipse cx="169.0" cy="42.0" rx="3.9" ry="4.3"/><ellipse cx="177.6" cy="42.0" rx="3.9" ry="4.3"/><ellipse cx="186.2" cy="42.0" rx="3.9" ry="4.3"/><ellipse cx="194.8" cy="42.0" rx="3.9" ry="4.3"/><ellipse cx="203.4" cy="42.0" rx="3.9" ry="4.3"/><ellipse cx="212.0" cy="42.0" rx="3.9" ry="4.3"/><ellipse cx="220.6" cy="42.0" rx="3.9" ry="4.3"/><ellipse cx="44.3" cy="51.5" rx="3.9" ry="4.3"/><ellipse cx="52.9" cy="51.5" rx="3.9" ry="4.3"/><ellipse cx="61.5" cy="51.5" rx="3.9" ry="4.3"/><ellipse cx="70.1" cy="51.5" rx="3.9" ry="4.3"/><ellipse cx="78.7" cy="51.5" rx="3.9" ry="4.3"/><ellipse cx="87.3" cy="51.5" rx="3.9" ry="4.3"/><ellipse cx="95.9" cy="51.5" rx="3.9" ry="4.3"/><ellipse cx="104.5" cy="51.5" rx="3.9" ry="4.3"/><ellipse cx="113.1" cy="51.5" rx="3.9" ry="4.3"/><ellipse cx="121.7" cy="51.5" rx="3.9" ry="4.3"/><ellipse cx="130.3" cy="51.5" rx="3.9" ry="4.3"/><ellipse cx="138.9" cy="51.5" rx="3.9" ry="4.3"/><ellipse cx="147.5" cy="51.5" rx="3.9" ry="4.3"/><ellipse cx="156.1" cy="51.5" rx="3.9" ry="4.3"/><ellipse cx="164.7" cy="51.5" rx="3.9" ry="4.3"/><ellipse cx="173.3" cy="51.5" rx="3.9" ry="4.3"/><ellipse cx="181.9" cy="51.5" rx="3.9" ry="4.3"/><ellipse cx="190.5" cy="51.5" rx="3.9" ry="4.3"/><ellipse cx="199.1" cy="51.5" rx="3.9" ry="4.3"/><ellipse cx="207.7" cy="51.5" rx="3.9" ry="4.3"/><ellipse cx="216.3" cy="51.5" rx="3.9" ry="4.3"/><ellipse cx="40.0" cy="61.0" rx="3.9" ry="4.3"/><ellipse cx="48.6" cy="61.0" rx="3.9" ry="4.3"/><ellipse cx="57.2" cy="61.0" rx="3.9" ry="4.3"/><ellipse cx="65.8" cy="61.0" rx="3.9" ry="4.3"/><ellipse cx="74.4" cy="61.0" rx="3.9" ry="4.3"/><ellipse cx="83.0" cy="61.0" rx="3.9" ry="4.3"/><ellipse cx="91.6" cy="61.0" rx="3.9" ry="4.3"/><ellipse cx="100.2" cy="61.0" rx="3.9" ry="4.3"/><ellipse cx="108.8" cy="61.0" rx="3.9" ry="4.3"/><ellipse cx="117.4" cy="61.0" rx="3.9" ry="4.3"/><ellipse cx="126.0" cy="61.0" rx="3.9" ry="4.3"/><ellipse cx="134.6" cy="61.0" rx="3.9" ry="4.3"/><ellipse cx="143.2" cy="61.0" rx="3.9" ry="4.3"/><ellipse cx="151.8" cy="61.0" rx="3.9" ry="4.3"/><ellipse cx="160.4" cy="61.0" rx="3.9" ry="4.3"/><ellipse cx="169.0" cy="61.0" rx="3.9" ry="4.3"/><ellipse cx="177.6" cy="61.0" rx="3.9" ry="4.3"/><ellipse cx="186.2" cy="61.0" rx="3.9" ry="4.3"/><ellipse cx="194.8" cy="61.0" rx="3.9" ry="4.3"/><ellipse cx="203.4" cy="61.0" rx="3.9" ry="4.3"/><ellipse cx="212.0" cy="61.0" rx="3.9" ry="4.3"/><ellipse cx="220.6" cy="61.0" rx="3.9" ry="4.3"/></g>
<ellipse cx="40" cy="42" rx="12" ry="31" fill="#dcc67f"/>
<path d="M62 42Q70 29 95 28H211Q223 40 219 66Q216 96 196 112H95Q70 106 62 72z" fill="#df9810"/>
<g clip-path="url(#cc2)" fill="#fcc833"><ellipse cx="92.0" cy="33.0" rx="4" ry="4.9"/><ellipse cx="100.8" cy="33.0" rx="4" ry="4.9"/><ellipse cx="109.6" cy="33.0" rx="4" ry="4.9"/><ellipse cx="118.4" cy="33.0" rx="4" ry="4.9"/><ellipse cx="127.2" cy="33.0" rx="4" ry="4.9"/><ellipse cx="136.0" cy="33.0" rx="4" ry="4.9"/><ellipse cx="144.8" cy="33.0" rx="4" ry="4.9"/><ellipse cx="153.6" cy="33.0" rx="4" ry="4.9"/><ellipse cx="162.4" cy="33.0" rx="4" ry="4.9"/><ellipse cx="171.2" cy="33.0" rx="4" ry="4.9"/><ellipse cx="180.0" cy="33.0" rx="4" ry="4.9"/><ellipse cx="188.8" cy="33.0" rx="4" ry="4.9"/><ellipse cx="197.6" cy="33.0" rx="4" ry="4.9"/><ellipse cx="206.4" cy="33.0" rx="4" ry="4.9"/><ellipse cx="215.2" cy="33.0" rx="4" ry="4.9"/><ellipse cx="96.4" cy="43.5" rx="4" ry="4.9"/><ellipse cx="105.2" cy="43.5" rx="4" ry="4.9"/><ellipse cx="114.0" cy="43.5" rx="4" ry="4.9"/><ellipse cx="122.8" cy="43.5" rx="4" ry="4.9"/><ellipse cx="131.6" cy="43.5" rx="4" ry="4.9"/><ellipse cx="140.4" cy="43.5" rx="4" ry="4.9"/><ellipse cx="149.2" cy="43.5" rx="4" ry="4.9"/><ellipse cx="158.0" cy="43.5" rx="4" ry="4.9"/><ellipse cx="166.8" cy="43.5" rx="4" ry="4.9"/><ellipse cx="175.6" cy="43.5" rx="4" ry="4.9"/><ellipse cx="184.4" cy="43.5" rx="4" ry="4.9"/><ellipse cx="193.2" cy="43.5" rx="4" ry="4.9"/><ellipse cx="202.0" cy="43.5" rx="4" ry="4.9"/><ellipse cx="210.8" cy="43.5" rx="4" ry="4.9"/><ellipse cx="219.6" cy="43.5" rx="4" ry="4.9"/><ellipse cx="92.0" cy="54.0" rx="4" ry="4.9"/><ellipse cx="100.8" cy="54.0" rx="4" ry="4.9"/><ellipse cx="109.6" cy="54.0" rx="4" ry="4.9"/><ellipse cx="118.4" cy="54.0" rx="4" ry="4.9"/><ellipse cx="127.2" cy="54.0" rx="4" ry="4.9"/><ellipse cx="136.0" cy="54.0" rx="4" ry="4.9"/><ellipse cx="144.8" cy="54.0" rx="4" ry="4.9"/><ellipse cx="153.6" cy="54.0" rx="4" ry="4.9"/><ellipse cx="162.4" cy="54.0" rx="4" ry="4.9"/><ellipse cx="171.2" cy="54.0" rx="4" ry="4.9"/><ellipse cx="180.0" cy="54.0" rx="4" ry="4.9"/><ellipse cx="188.8" cy="54.0" rx="4" ry="4.9"/><ellipse cx="197.6" cy="54.0" rx="4" ry="4.9"/><ellipse cx="206.4" cy="54.0" rx="4" ry="4.9"/><ellipse cx="215.2" cy="54.0" rx="4" ry="4.9"/><ellipse cx="96.4" cy="64.5" rx="4" ry="4.9"/><ellipse cx="105.2" cy="64.5" rx="4" ry="4.9"/><ellipse cx="114.0" cy="64.5" rx="4" ry="4.9"/><ellipse cx="122.8" cy="64.5" rx="4" ry="4.9"/><ellipse cx="131.6" cy="64.5" rx="4" ry="4.9"/><ellipse cx="140.4" cy="64.5" rx="4" ry="4.9"/><ellipse cx="149.2" cy="64.5" rx="4" ry="4.9"/><ellipse cx="158.0" cy="64.5" rx="4" ry="4.9"/><ellipse cx="166.8" cy="64.5" rx="4" ry="4.9"/><ellipse cx="175.6" cy="64.5" rx="4" ry="4.9"/><ellipse cx="184.4" cy="64.5" rx="4" ry="4.9"/><ellipse cx="193.2" cy="64.5" rx="4" ry="4.9"/><ellipse cx="202.0" cy="64.5" rx="4" ry="4.9"/><ellipse cx="210.8" cy="64.5" rx="4" ry="4.9"/><ellipse cx="219.6" cy="64.5" rx="4" ry="4.9"/><ellipse cx="92.0" cy="75.0" rx="4" ry="4.9"/><ellipse cx="100.8" cy="75.0" rx="4" ry="4.9"/><ellipse cx="109.6" cy="75.0" rx="4" ry="4.9"/><ellipse cx="118.4" cy="75.0" rx="4" ry="4.9"/><ellipse cx="127.2" cy="75.0" rx="4" ry="4.9"/><ellipse cx="136.0" cy="75.0" rx="4" ry="4.9"/><ellipse cx="144.8" cy="75.0" rx="4" ry="4.9"/><ellipse cx="153.6" cy="75.0" rx="4" ry="4.9"/><ellipse cx="162.4" cy="75.0" rx="4" ry="4.9"/><ellipse cx="171.2" cy="75.0" rx="4" ry="4.9"/><ellipse cx="180.0" cy="75.0" rx="4" ry="4.9"/><ellipse cx="188.8" cy="75.0" rx="4" ry="4.9"/><ellipse cx="197.6" cy="75.0" rx="4" ry="4.9"/><ellipse cx="206.4" cy="75.0" rx="4" ry="4.9"/><ellipse cx="215.2" cy="75.0" rx="4" ry="4.9"/><ellipse cx="96.4" cy="85.5" rx="4" ry="4.9"/><ellipse cx="105.2" cy="85.5" rx="4" ry="4.9"/><ellipse cx="114.0" cy="85.5" rx="4" ry="4.9"/><ellipse cx="122.8" cy="85.5" rx="4" ry="4.9"/><ellipse cx="131.6" cy="85.5" rx="4" ry="4.9"/><ellipse cx="140.4" cy="85.5" rx="4" ry="4.9"/><ellipse cx="149.2" cy="85.5" rx="4" ry="4.9"/><ellipse cx="158.0" cy="85.5" rx="4" ry="4.9"/><ellipse cx="166.8" cy="85.5" rx="4" ry="4.9"/><ellipse cx="175.6" cy="85.5" rx="4" ry="4.9"/><ellipse cx="184.4" cy="85.5" rx="4" ry="4.9"/><ellipse cx="193.2" cy="85.5" rx="4" ry="4.9"/><ellipse cx="202.0" cy="85.5" rx="4" ry="4.9"/><ellipse cx="210.8" cy="85.5" rx="4" ry="4.9"/><ellipse cx="219.6" cy="85.5" rx="4" ry="4.9"/><ellipse cx="92.0" cy="96.0" rx="4" ry="4.9"/><ellipse cx="100.8" cy="96.0" rx="4" ry="4.9"/><ellipse cx="109.6" cy="96.0" rx="4" ry="4.9"/><ellipse cx="118.4" cy="96.0" rx="4" ry="4.9"/><ellipse cx="127.2" cy="96.0" rx="4" ry="4.9"/><ellipse cx="136.0" cy="96.0" rx="4" ry="4.9"/><ellipse cx="144.8" cy="96.0" rx="4" ry="4.9"/><ellipse cx="153.6" cy="96.0" rx="4" ry="4.9"/><ellipse cx="162.4" cy="96.0" rx="4" ry="4.9"/><ellipse cx="171.2" cy="96.0" rx="4" ry="4.9"/><ellipse cx="180.0" cy="96.0" rx="4" ry="4.9"/><ellipse cx="188.8" cy="96.0" rx="4" ry="4.9"/><ellipse cx="197.6" cy="96.0" rx="4" ry="4.9"/><ellipse cx="206.4" cy="96.0" rx="4" ry="4.9"/><ellipse cx="215.2" cy="96.0" rx="4" ry="4.9"/><ellipse cx="96.4" cy="106.5" rx="4" ry="4.9"/><ellipse cx="105.2" cy="106.5" rx="4" ry="4.9"/><ellipse cx="114.0" cy="106.5" rx="4" ry="4.9"/><ellipse cx="122.8" cy="106.5" rx="4" ry="4.9"/><ellipse cx="131.6" cy="106.5" rx="4" ry="4.9"/><ellipse cx="140.4" cy="106.5" rx="4" ry="4.9"/><ellipse cx="149.2" cy="106.5" rx="4" ry="4.9"/><ellipse cx="158.0" cy="106.5" rx="4" ry="4.9"/><ellipse cx="166.8" cy="106.5" rx="4" ry="4.9"/><ellipse cx="175.6" cy="106.5" rx="4" ry="4.9"/><ellipse cx="184.4" cy="106.5" rx="4" ry="4.9"/><ellipse cx="193.2" cy="106.5" rx="4" ry="4.9"/><ellipse cx="202.0" cy="106.5" rx="4" ry="4.9"/><ellipse cx="210.8" cy="106.5" rx="4" ry="4.9"/><ellipse cx="219.6" cy="106.5" rx="4" ry="4.9"/><ellipse cx="92.0" cy="117.0" rx="4" ry="4.9"/><ellipse cx="100.8" cy="117.0" rx="4" ry="4.9"/><ellipse cx="109.6" cy="117.0" rx="4" ry="4.9"/><ellipse cx="118.4" cy="117.0" rx="4" ry="4.9"/><ellipse cx="127.2" cy="117.0" rx="4" ry="4.9"/><ellipse cx="136.0" cy="117.0" rx="4" ry="4.9"/><ellipse cx="144.8" cy="117.0" rx="4" ry="4.9"/><ellipse cx="153.6" cy="117.0" rx="4" ry="4.9"/><ellipse cx="162.4" cy="117.0" rx="4" ry="4.9"/><ellipse cx="171.2" cy="117.0" rx="4" ry="4.9"/><ellipse cx="180.0" cy="117.0" rx="4" ry="4.9"/><ellipse cx="188.8" cy="117.0" rx="4" ry="4.9"/><ellipse cx="197.6" cy="117.0" rx="4" ry="4.9"/><ellipse cx="206.4" cy="117.0" rx="4" ry="4.9"/><ellipse cx="215.2" cy="117.0" rx="4" ry="4.9"/></g>
<ellipse cx="77" cy="74" rx="17" ry="43" fill="#ddc781"/>
<ellipse cx="79" cy="74" rx="10" ry="31" fill="#cdb671" opacity=".55"/>
</g>
</svg></div>
  </div>
  <div class="card" style="left:905px;top:726px;height:300px"><svg class="inf" width="14" height="14" viewBox="0 0 14 14"><circle cx="7" cy="7.2" r="6.1" fill="none" stroke="#737373" stroke-width="1"/><path d="M7 3.8v4.3" stroke="#737373" stroke-width="1.15"/><circle cx="7" cy="10.1" r=".7" fill="#737373"/></svg><div class="ttl">以图问图</div>
    <div class="img" style="height:228px"><svg width="240" height="228" viewBox="0 0 240 228" style="display:block" font-family="Liberation Sans"><defs><radialGradient id="tb" cx=".5" cy=".4" r=".8"><stop offset="0" stop-color="#e2d6c4"/><stop offset="1" stop-color="#d5c4ac"/></radialGradient></defs><rect width="240" height="228" fill="url(#tb)"/><text x="120" y="18" font-size="7" font-weight="bold" fill="#2e2a26" text-anchor="middle">著名城市及其所属国家和标志性建筑/景点</text><text x="56.4" y="34.5" font-size="6" fill="#2e2a26" text-anchor="middle">城市</text><text x="112.7" y="34.5" font-size="6" fill="#2e2a26" text-anchor="middle">国家</text><text x="176.8" y="34.5" font-size="6" fill="#2e2a26" text-anchor="middle">标志性建筑/景点</text><text x="56.4" y="50.5" font-size="6" fill="#2e2a26" text-anchor="middle">悉尼</text><text x="112.7" y="50.5" font-size="6" fill="#2e2a26" text-anchor="middle">澳大利亚</text><text x="176.8" y="50.5" font-size="6" fill="#2e2a26" text-anchor="middle">悉尼歌剧院</text><text x="56.4" y="66.5" font-size="6" fill="#2e2a26" text-anchor="middle">里约热内卢</text><text x="112.7" y="66.5" font-size="6" fill="#2e2a26" text-anchor="middle">巴西</text><text x="176.8" y="66.5" font-size="6" fill="#2e2a26" text-anchor="middle">基督像</text><text x="56.4" y="82.5" font-size="6" fill="#2e2a26" text-anchor="middle">巴黎</text><text x="112.7" y="82.5" font-size="6" fill="#2e2a26" text-anchor="middle">法国</text><text x="176.8" y="82.5" font-size="6" fill="#2e2a26" text-anchor="middle">埃菲尔铁塔</text><text x="56.4" y="98.5" font-size="6" fill="#2e2a26" text-anchor="middle">伦敦</text><text x="112.7" y="98.5" font-size="6" fill="#2e2a26" text-anchor="middle">英国</text><text x="176.8" y="98.5" font-size="6" fill="#2e2a26" text-anchor="middle">大本钟</text></svg></div>
  </div>

</div>
<div id="taskbar" style="position:absolute;left:0;top:891px;width:1256px;height:48px;background:linear-gradient(90deg,#d6edf4 0px,#e9eeee 50px,#eeeeee 200px,#e2e5ee 340px,#dfe3ee 470px,#eceef2 570px,#f2eee9 700px,#f4ece3 950px,#f3ece5 1256px);border-top:1px solid #cfcfcf">
  <svg class="abs" style="left:758px;top:11px" width="25" height="25" viewBox="758 903 25 25"><defs><linearGradient id="wl" gradientUnits="userSpaceOnUse" x1="759" y1="904" x2="782" y2="927"><stop offset="0" stop-color="#4fcdf6"/><stop offset="1" stop-color="#0867cf"/></linearGradient></defs><path d="M759.8 904h10.6v10.8H759v-10a.8.8 0 0 1 .8-.8zM771.5 904h9.7a.8.8 0 0 1 .8.8v10H771.5zM759 916h11.4v11h-10.6a.8.8 0 0 1-.8-.8zM771.5 916H782v10.2a.8.8 0 0 1-.8.8h-9.7z" fill="url(#wl)"/></svg>
  <svg class="abs" style="left:803px;top:11px" width="25" height="26" viewBox="803 902 25 26"><defs><linearGradient id="ieg" x1="0" y1="0" x2="0" y2="1"><stop offset="0" stop-color="#86d64a"/><stop offset="1" stop-color="#3f9e1c"/></linearGradient></defs><circle cx="815.3" cy="914.8" r="10" fill="#fff" opacity=".9"/><circle cx="815.3" cy="914.8" r="8.8" fill="url(#ieg)"/><path d="M809.5 913.6a5.9 4 0 0 1 11.7 0z" fill="#fff"/><rect x="817" y="916.2" width="8" height="2.6" fill="#fff"/><path d="M806.5 926c-2-2.5 2-10.5 8-16.5 5-5 10-7 11-5.5" fill="none" stroke="#5cbc2a" stroke-width="1.6"/></svg>
  <svg class="abs" style="left:845px;top:903px;top:12px" width="28" height="25" viewBox="845 903 28 25"><path d="M866.5 912.5C866 907.5 861.5 904.8 857.5 904.8 852 904.8 848.2 908.5 848.2 913 848.2 916 850 918.5 852 919.8L850.8 922.8 855 921C856.5 921.5 858 921.6 859.5 921.3" fill="none" stroke="#2f8df2" stroke-width="2.3" stroke-linecap="round" stroke-linejoin="round"/><path d="M865 914L869.6 918.8 864.4 923 860.8 918.8z" fill="none" stroke="#2f8df2" stroke-width=".8" opacity=".5"/><circle cx="865" cy="914" r="1.9" fill="#5fcf3a"/><circle cx="869.6" cy="918.8" r="1.9" fill="#2ea8f5"/><circle cx="864.4" cy="923" r="1.9" fill="#f06a2a"/><circle cx="860.8" cy="918.8" r="1.9" fill="#f7c81e"/></svg>
  <div class="abs" style="left:884px;top:4px;width:38px;height:38px;border-radius:5px;background:#f7f7f7;border:1px solid #e8e8e8"></div>
  <svg class="abs" style="left:890px;top:11px" width="26" height="26" viewBox="890 902 26 26"><defs><linearGradient id="eg1" gradientUnits="userSpaceOnUse" x1="892" y1="912" x2="915" y2="910"><stop offset="0" stop-color="#1a8fe0"/><stop offset=".5" stop-color="#34bcd0"/><stop offset="1" stop-color="#7ad85a"/></linearGradient><linearGradient id="eg2" gradientUnits="userSpaceOnUse" x1="892" y1="912" x2="910" y2="927"><stop offset="0" stop-color="#1b86dc"/><stop offset="1" stop-color="#0c4a98"/></linearGradient></defs>
<path d="M891.2 915C891.2 908.3 896.5 903 903.2 903C909.8 903 915.2 908.3 915.2 913.6C915.2 916.6 912.8 918.3 909.8 918.3H905.2C903.6 918.3 902.2 917.2 902.2 915.6C902.2 913.2 904.3 911.2 906.8 911.2C903.3 908.8 897 909.5 893.6 913C892.6 914 891.8 914.6 891.2 915Z" fill="url(#eg1)"/>
<path d="M891.2 915C891.2 921.6 896.5 927 903.2 927C907.8 927 911.8 924.6 913.8 921.6C912.3 922.3 910.5 922.8 908.5 922.8C903.2 922.8 899.6 919.8 899.6 916C899.6 913.2 902.3 911.2 906.8 911.2C902.8 908.8 896.8 909.4 893.6 913C892.6 914 891.8 914.6 891.2 915Z" fill="url(#eg2)"/>
<path d="M906.8 911.2C904.3 911.2 902.2 913.2 902.2 915.6C902.2 917.2 903.6 918.3 905.2 918.3H909.8C912.8 918.3 913.6 919.5 913.8 921.6C912.3 922.3 910.5 922.8 908.5 922.8C903.2 922.8 899.6 919.8 899.6 916C899.6 913.2 902.3 911.2 906.8 911.2Z" fill="#fff" opacity=".0"/>
<ellipse cx="905.6" cy="916.2" rx="3.6" ry="3.4" fill="#f7f7f7"/>
<path d="M905.5 919.5H912.5C913.5 919.5 914 920.5 913.8 921.6C912.3 922.3 910.5 922.8 908.5 922.8C906.5 922.8 905.5 921.5 905.5 919.5Z" fill="#f7f7f7" opacity=".0"/>
</svg>
  <div class="abs" style="left:895px;top:39px;width:16px;height:3px;border-radius:2px;background:#1b7d97"></div>
  <svg class="abs" style="left:934px;top:12px" width="26" height="23" viewBox="934 904 26 23"><defs><linearGradient id="fg" x1="0" y1="0" x2="0" y2="1"><stop offset="0" stop-color="#fdd760"/><stop offset="1" stop-color="#f5b921"/></linearGradient></defs><path d="M935 905.5a.8.8 0 0 1 .8-.8h6.2l1.8 1.8H958.2a.8.8 0 0 1 .8.8v2.2H935z" fill="#e3a616"/><path d="M935 908h24v17.2a.8.8 0 0 1-.8.8H935.8a.8.8 0 0 1-.8-.8z" fill="url(#fg)"/><path d="M939.5 921a1 1 0 0 1 1-1h13a1 1 0 0 1 1 1v5h-15z" fill="#1f7ad6"/><rect x="941.5" y="922" width="11" height="1.1" fill="#0d4f9a"/></svg>
  <svg class="abs" style="left:978px;top:11px" width="25" height="25" viewBox="0 0 25 25"><rect width="25" height="25" rx="5" fill="#1fc45a"/><ellipse cx="10" cy="10.5" rx="7" ry="5.8" fill="#fff"/><path d="M5.5 14.5l-1 3 3-1.8z" fill="#fff"/><ellipse cx="15.5" cy="15" rx="6" ry="5" fill="#fff" stroke="#1fc45a" stroke-width="1"/><path d="M19.5 18.5l1 2.5-2.8-1.5z" fill="#fff"/><circle cx="7.8" cy="9.3" r=".9" fill="#1fc45a"/><circle cx="12" cy="9.3" r=".9" fill="#1fc45a"/><circle cx="13.5" cy="14.5" r=".8" fill="#1fc45a"/><circle cx="17.5" cy="14.5" r=".8" fill="#1fc45a"/></svg>
  <div class="abs" style="left:812px;top:39px;width:6px;height:3px;border-radius:2px;background:#777"></div>
  <div class="abs" style="left:856px;top:39px;width:6px;height:3px;border-radius:2px;background:#777"></div>
  <div class="abs" style="left:944px;top:39px;width:6px;height:3px;border-radius:2px;background:#777"></div>
  <div class="abs" style="left:988px;top:39px;width:6px;height:3px;border-radius:2px;background:#777"></div>
</div>
</body></html>
